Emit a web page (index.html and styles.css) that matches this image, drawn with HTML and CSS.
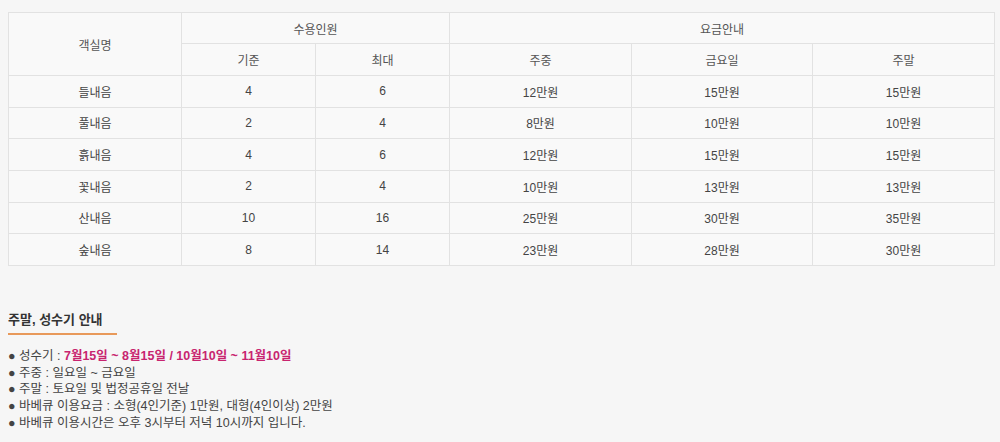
FILE: index.html
```html
<!DOCTYPE html>
<html lang="ko">
<head>
<meta charset="utf-8">
<link rel="stylesheet" href="styles.css">
</head>
<body>
<table class="rate">
  <colgroup>
    <col class="c1"><col class="c2"><col class="c3"><col class="c4"><col class="c5"><col class="c6">
  </colgroup>
  <thead>
    <tr class="h1">
      <th rowspan="2">객실명</th>
      <th colspan="2">수용인원</th>
      <th colspan="3">요금안내</th>
    </tr>
    <tr class="h2">
      <th>기준</th><th>최대</th><th>주중</th><th>금요일</th><th>주말</th>
    </tr>
  </thead>
  <tbody>
    <tr><td>들내음</td><td>4</td><td>6</td><td>12만원</td><td>15만원</td><td>15만원</td></tr>
    <tr><td>풀내음</td><td>2</td><td>4</td><td>8만원</td><td>10만원</td><td>10만원</td></tr>
    <tr><td>흙내음</td><td>4</td><td>6</td><td>12만원</td><td>15만원</td><td>15만원</td></tr>
    <tr><td>꽃내음</td><td>2</td><td>4</td><td>10만원</td><td>13만원</td><td>13만원</td></tr>
    <tr><td>산내음</td><td>10</td><td>16</td><td>25만원</td><td>30만원</td><td>35만원</td></tr>
    <tr><td>숲내음</td><td>8</td><td>14</td><td>23만원</td><td>28만원</td><td>30만원</td></tr>
  </tbody>
</table>

<div class="notice">
  <h3 class="notice-title">주말, 성수기 안내</h3>
  <ul class="notice-list">
    <li>● 성수기 : <strong class="hl">7월15일 ~ 8월15일 / 10월10일 ~ 11월10일</strong></li>
    <li>● 주중 : 일요일 ~ 금요일</li>
    <li>● 주말 : 토요일 및 법정공휴일 전날</li>
    <li>● 바베큐 이용요금 : 소형(4인기준) 1만원, 대형(4인이상) 2만원</li>
    <li>● 바베큐 이용시간은 오후 3시부터 저녁 10시까지 입니다.</li>
  </ul>
</div>
</body>
</html>
```

FILE: styles.css
```css
html, body {
  margin: 0;
  padding: 0;
  background: #f6f6f6;
}
body {
  padding: 12px 7px 0 8px;
  font-family: "Liberation Sans", "Noto Sans CJK KR", sans-serif;
  color: #555;
  font-size: 12px;
}
.rate {
  width: 986px;
  border-collapse: collapse;
  table-layout: fixed;
  background: #f9f9f9;
  border: 1px solid #e0e0e0;
}
.c1 { width: 173px; }
.c2 { width: 134px; }
.c3 { width: 134px; }
.c4 { width: 182px; }
.c5 { width: 181px; }
.c6 { width: 182px; }
.rate th, .rate td {
  border: 1px solid #e2e2e2;
  text-align: center;
  font-weight: normal;
  padding: 0;
  color: #555;
  font-size: 12px;
}
.rate .h1 th { height: 30px; }
.rate .h2 th { height: 31px; }
.rate td { height: 30.65px; color: #444; }

.notice {
  margin-top: 45px;
}
.notice-title {
  display: inline-block;
  margin: 0;
  padding: 0 0 4px 0;
  width: 109px;
  font-size: 13px;
  font-weight: bold;
  color: #333;
  border-bottom: 2px solid #e8995a;
  line-height: 18px;
}
.notice-list {
  list-style: none;
  margin: 13px 0 0 0;
  padding: 0;
  font-size: 12.5px;
  color: #444;
  line-height: 16.8px;
}
.hl {
  color: #c8246f;
  font-weight: bold;
}
```
